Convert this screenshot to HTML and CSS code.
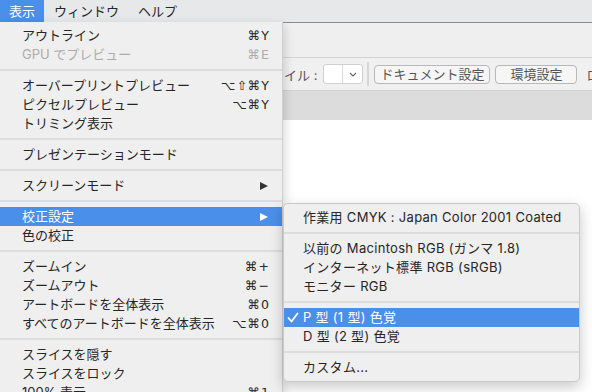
FILE: index.html
```html
<!DOCTYPE html>
<html lang="ja">
<head>
  <meta charset="UTF-8">
  <title>表示メニュー</title>
  <link rel="stylesheet" href="styles.css">
</head>
<body>
  <div class="menubar">
    <span class="menubar-item active">表示</span>
    <span class="menubar-item">ウィンドウ</span>
    <span class="menubar-item">ヘルプ</span>
  </div>

  <div class="window">
    <div class="titlebar"></div>
    <div class="controlbar">
      <span class="ctrl-label">プロファイル :</span>
      <div class="select">
        <span class="select-value"></span>
        <span class="select-arrow">
          <svg width="8" height="5" viewBox="0 0 8 5"><polyline points="1,1 4,4 7,1" fill="none" stroke="#666" stroke-width="1.1"/></svg>
        </span>
      </div>
      <span class="ctrl-divider"></span>
      <button class="ctrl-btn btn-doc">ドキュメント設定</button>
      <button class="ctrl-btn btn-pref">環境設定</button>
      <span class="ctrl-label ctrl-tail">ロック</span>
    </div>
    <div class="tabbar"></div>
    <div class="canvas"></div>
  </div>

  <!-- 表示メニュー -->
  <div class="menu menu-main">
    <div class="menu-item"><span>アウトライン</span><span class="key">⌘Y</span></div>
    <div class="menu-item disabled"><span>GPU でプレビュー</span><span class="key">⌘E</span></div>
    <div class="menu-sep"></div>
    <div class="menu-item"><span>オーバープリントプレビュー</span><span class="key">⌥⇧⌘Y</span></div>
    <div class="menu-item"><span>ピクセルプレビュー</span><span class="key">⌥⌘Y</span></div>
    <div class="menu-item"><span>トリミング表示</span></div>
    <div class="menu-sep"></div>
    <div class="menu-item"><span>プレゼンテーションモード</span></div>
    <div class="menu-sep"></div>
    <div class="menu-item"><span>スクリーンモード</span><span class="arrow"></span></div>
    <div class="menu-sep"></div>
    <div class="menu-item selected"><span>校正設定</span><span class="arrow"></span></div>
    <div class="menu-item"><span>色の校正</span></div>
    <div class="menu-sep"></div>
    <div class="menu-item"><span>ズームイン</span><span class="key">⌘+</span></div>
    <div class="menu-item"><span>ズームアウト</span><span class="key">⌘−</span></div>
    <div class="menu-item"><span>アートボードを全体表示</span><span class="key">⌘0</span></div>
    <div class="menu-item"><span>すべてのアートボードを全体表示</span><span class="key">⌥⌘0</span></div>
    <div class="menu-sep"></div>
    <div class="menu-item"><span>スライスを隠す</span></div>
    <div class="menu-item"><span>スライスをロック</span></div>
    <div class="menu-item"><span>100% 表示</span><span class="key">⌘1</span></div>
  </div>

  <!-- 校正設定サブメニュー -->
  <div class="menu menu-sub">
    <div class="menu-item"><span>作業用 CMYK : Japan Color 2001 Coated</span></div>
    <div class="menu-sep"></div>
    <div class="menu-item"><span>以前の Macintosh RGB (ガンマ 1.8)</span></div>
    <div class="menu-item"><span>インターネット標準 RGB (sRGB)</span></div>
    <div class="menu-item"><span>モニター RGB</span></div>
    <div class="menu-sep"></div>
    <div class="menu-item selected">
      <svg class="check" width="12" height="11" viewBox="0 0 12 11"><polyline points="1.5,6 4.5,9.5 10.5,1.5" fill="none" stroke="#fff" stroke-width="1.8" stroke-linecap="round" stroke-linejoin="round"/></svg>
      <span>P 型 (1 型) 色覚</span>
    </div>
    <div class="menu-item"><span>D 型 (2 型) 色覚</span></div>
    <div class="menu-sep"></div>
    <div class="menu-item"><span>カスタム...</span></div>
  </div>
</body>
</html>
```

FILE: styles.css
```css
:root {
  --menu-bg: #efefef;
  --menu-text: #262626;
  --menu-disabled: #acacac;
  --select-blue: #4a8fe9;
  --font-ui: 'Inter', 'Noto Sans CJK JP', 'DejaVu Sans', sans-serif;
}
* { box-sizing: border-box; margin: 0; padding: 0; }
body { width: 592px; height: 392px; overflow: hidden; position: relative; font-family: var(--font-ui); font-size: 13px; color: var(--menu-text); background: #fff; }

/* メニューバー */
.menubar { display: flex; height: 23px; background: #e6e8ea; border-bottom: 1px solid #8c8c8c; }
.menubar-item { height: 22px; line-height: 22px; padding: 0 10px 0 9px; }
.menubar-item.active { background: var(--select-blue); color: #fff; padding-right: 9px; margin-right: 1px; }

/* 背景のウィンドウ */
.window { display: flex; flex-direction: column; height: 369px; }
.titlebar { height: 35px; background: #efefef; border-bottom: 1px solid #d4d4d4; }
.controlbar { display: flex; align-items: center; height: 33px; padding-left: 232px; background: #f0f0f0; border-bottom: 1px solid #d2d2d2; color: #555; white-space: nowrap; overflow: hidden; }
.controlbar > * { flex-shrink: 0; }
.ctrl-label { margin-right: 6px; }
.ctrl-tail { margin-left: 9px; }
.select { display: flex; width: 40px; height: 20px; background: #fff; border: 1px solid #d0d0d0; border-radius: 3px; }
.select-value { flex: 1; border-right: 1px solid #d8d8d8; }
.select-arrow { width: 19px; display: flex; align-items: center; justify-content: center; }
.ctrl-divider { width: 2px; height: 24px; background: #d6d6d6; margin: 0 5px 0 4px; }
.ctrl-btn { height: 19px; font-family: var(--font-ui); font-size: 13px; color: #555; background: #f6f6f6; border: 1px solid #b8b8b8; border-radius: 4px; line-height: 17px; }
.btn-doc { width: 116px; margin-right: 5px; }
.btn-pref { width: 82px; }
.tabbar { height: 29px; background: #dcdcdc; }
.canvas { flex: 1; background: #fff; }

/* ドロップダウンメニュー */
.menu { position: absolute; background: var(--menu-bg); padding: 4px 0; }
.menu-main { top: 22px; left: 0; width: 283px; height: 400px; border-right: 1px solid #d0d0d0; box-shadow: 1px 4px 10px rgba(0, 0, 0, 0.18); }
.menu-sub { top: 203px; left: 283px; width: 297px; border: 1px solid #c9c9c9; border-radius: 5px; box-shadow: 0 5px 14px rgba(0, 0, 0, 0.22); }
.menu-item { display: flex; align-items: center; justify-content: space-between; height: 19px; line-height: 19px; padding: 0 12px 0 22px; white-space: nowrap; }
.menu-sub .menu-item { justify-content: flex-start; padding-left: 19px; position: relative; letter-spacing: 0.3px; }
.menu-item.disabled { color: var(--menu-disabled); }
.menu-item.selected { background: var(--select-blue); color: #fff; }
.menu-sep { height: 2px; background: #dcdcdc; margin: 5px 0; }
.key { font-family: 'DejaVu Sans', sans-serif; font-size: 12.5px; letter-spacing: 1px; }
.arrow { width: 0; height: 0; margin-right: 2px; border-left: 8px solid #333; border-top: 4.5px solid transparent; border-bottom: 4.5px solid transparent; }
.selected .arrow { border-left-color: #fff; }
.check { position: absolute; left: 3px; top: 4px; }
```
